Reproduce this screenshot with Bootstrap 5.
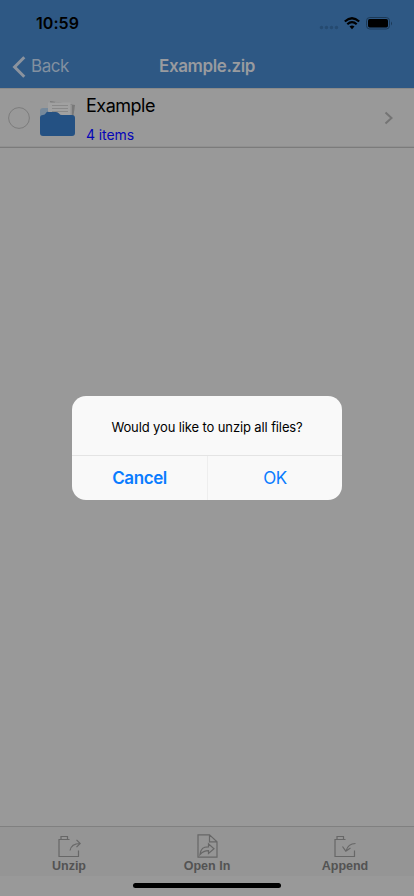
<!DOCTYPE html>
<html lang="en">
<head>
<meta charset="utf-8">
<meta name="viewport" content="width=device-width, initial-scale=1">
<title>Example.zip</title>
<link href="https://cdn.jsdelivr.net/npm/bootstrap@5.3.0/dist/css/bootstrap.min.css" rel="stylesheet">
<style>
body{font-family:Inter,"Liberation Sans",sans-serif;background:#999;color:#000;height:896px;overflow:hidden}
svg{display:block;flex:none}
.status{height:44px;padding:2px 22px 0 36px}
.status svg{margin-top:2px}
.clock{font-size:16px;font-weight:600;line-height:20px;letter-spacing:.05px}
.top{background:#2e5884;height:88px}
.titlebar{height:44px;color:#999b9f;display:grid;grid-template-columns:1fr auto 1fr;padding:2px 12px 0}
.back{font-size:17px;letter-spacing:-.45px;color:#8290a0;gap:5px}
.back svg{margin-top:-1px}
.title{font-size:17px;font-weight:600;letter-spacing:-.38px}
.entry{height:60px;border-top:1px solid #8a8a8a;border-bottom:1px solid #7b7b7b;box-shadow:inset 0 -1px #909090;padding:0 20px 0 8px}
.entry-text{padding-top:2px}
.entry-name{font-size:18px;line-height:24px;letter-spacing:-.5px}
.entry-sub{font-size:14px;line-height:20px;color:#0505b8;letter-spacing:-.1px;margin-top:7px}
.tools{height:70px;background:#999;border-top:1px solid #808080}
.tools .tool{height:49px;background:#959595;padding-top:7px;font:bold 12.5px/14px "Liberation Sans",sans-serif;color:#535353}
.homebar{width:148px;height:5px;border-radius:3px;background:#000;margin-top:7px}
.sheet{left:72px;top:396px;width:270px;height:104px;border-radius:14px;background:#f9f9f9;overflow:hidden}
.message{height:60px;font-size:13px;letter-spacing:-.12px;border-bottom:1px solid #e4e4e4;padding-top:4px}
.choice{height:44px;font-size:17px;color:#0a7cff;background:none;border:0;letter-spacing:-.4px;padding:2px 0 0}
.choice+.choice{border-left:1px solid #eee}
</style>
<script src="https://cdn.jsdelivr.net/npm/bootstrap@5.3.0/dist/js/bootstrap.bundle.min.js"></script>
</head>
<body class="d-flex flex-column position-relative">
<header class="top">
  <div class="status d-flex align-items-center justify-content-between">
    <span class="clock">10:59</span>
    <svg width="75" height="16" viewBox="0 0 75 16">
      <g fill="#254a70"><circle cx="4.500" cy="11.500" r="1.700"/><circle cx="9.500" cy="11.500" r="1.700"/><circle cx="14.500" cy="11.500" r="1.700"/><circle cx="19.500" cy="11.500" r="1.700"/></g>
      <g fill="none" stroke="#000" stroke-width="2.200"><path d="M27.800 5.500Q35 -1 42.200 5.500"/><path d="M30.300 8.200Q35 4 39.700 8.200"/></g>
      <path d="M32.500 10.600Q35 8.500 37.500 10.600L35 13.200Z"/>
      <rect x="49.500" y="1.500" width="23" height="11.500" rx="3.300" fill="none" stroke="#1c3956"/>
      <rect x="51" y="3" width="20" height="8.500" rx="1.700"/><path d="M74 5.500v4q2-2 0-4" fill="#1c3956"/>
    </svg>
  </div>
  <nav class="titlebar align-items-center">
    <div class="back d-flex align-items-center"><svg width="14" height="22" viewBox="0 0 14 22" fill="none" stroke="#8b939e" stroke-width="3"><path d="M12.300 1.300 2.600 11l9.700 9.700"/></svg><span>Back</span></div>
    <div class="title">Example.zip</div><div></div>
  </nav>
</header>
<main class="flex-grow-1">
  <div class="entry d-flex align-items-center">
    <svg width="22" height="22" fill="none" stroke="#7c7c7c"><circle cx="11" cy="11" r="10.400"/></svg>
    <svg class="ms-2" width="40" height="38" viewBox="0 0 40 38">
      <path d="M2 12q0-3 3-3h7v10H2z" fill="#76899b"/>
      <path d="M12 2l25 4-2 14-20-3z" fill="#797979"/><path d="M17 3l17 3v14H17z" fill="#919191"/>
      <path d="M10 3.500h22.500V21H10z" fill="#a1a1a1"/><path d="M14 6.500h16M14 9.500h16M14 12.500h16" stroke="#898989"/>
      <path d="M2 19q0-3 3-3 2 0 3-2t3-1h7q2 0 3 1.500T24 16h10q3 0 3 3v15q0 3-3 3H5q-3 0-3-3z" fill="#245183"/>
    </svg>
    <div class="ms-2 entry-text"><div class="entry-name">Example</div><div class="entry-sub">4 items</div></div>
    <svg class="ms-auto" width="10" height="14" viewBox="0 0 10 14" fill="none" stroke="#747474" stroke-width="2"><path d="M1.500 1.500 7.500 7 1.500 12.500"/></svg>
  </div>
</main>
<footer class="tools">
  <div class="row g-0 text-center">
    <div class="tool col d-flex flex-column align-items-center"><svg width="24" height="25" viewBox="0 0 24 25" fill="none" stroke="#676767" stroke-width="1.200"><path d="M12.500 5.500H2v17h19.500v-6M4 5.500v-3h6.500v3M13 16.500C14 11.500 17 9.500 23 9.500M19.500 5.800 23.200 9.500l-3.700 3.600"/></svg><span>Unzip</span></div>
    <div class="tool col d-flex flex-column align-items-center"><svg width="24" height="25" viewBox="0 0 24 25" fill="none" stroke="#676767" stroke-width="1.200"><path d="M3 .8h11.500l7.500 7v15.400H3zM14.500.8v7H22M5 20.500C6 14.500 8 12.700 13.500 12.800v-3l5.500 5-5.500 4.700v-2.900C10 16.500 8 17.300 5 20.500z"/></svg><span>Open In</span></div>
    <div class="tool col d-flex flex-column align-items-center"><svg width="24" height="25" viewBox="0 0 24 25" fill="none" stroke="#676767" stroke-width="1.200"><path d="M12.500 5.500H2v17h19.500v-6M4 5.500v-3h6.500v3M22.500 9.500c-5 0-8 2-9.500 7.500M9.500 12.500 12.800 17.200l4.700-3.200"/></svg><span>Append</span></div>
  </div>
  <div class="homebar mx-auto"></div>
</footer>
<div class="sheet position-absolute" role="dialog">
  <div class="message d-flex align-items-center justify-content-center">Would you like to unzip all files?</div>
  <div class="d-flex"><button class="choice w-50 fw-semibold">Cancel</button><button class="choice w-50">OK</button></div>
</div>
</body>
</html>
